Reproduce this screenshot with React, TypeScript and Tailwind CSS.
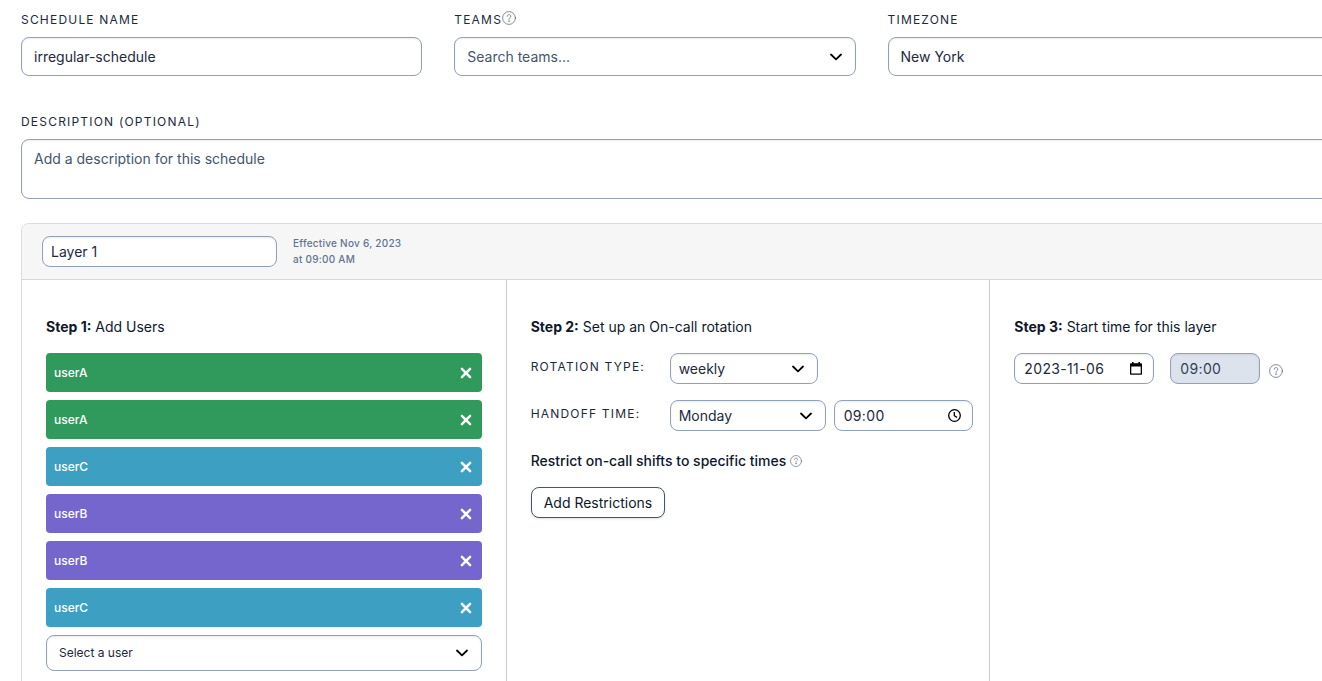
import { useState } from "react";

const field =
  "w-full rounded-lg border border-slate-400 bg-white text-sm text-slate-800 placeholder:text-slate-600 shadow-[inset_0_1px_2px_rgba(0,0,0,0.08)]";
const label = "text-xs leading-[19px] tracking-widest uppercase text-slate-800";

const initialUsers = [
  { name: "userA", color: "bg-[#30995c]" },
  { name: "userA", color: "bg-[#30995c]" },
  { name: "userC", color: "bg-[#3d9fc1]" },
  { name: "userB", color: "bg-[#7566cd]" },
  { name: "userB", color: "bg-[#7566cd]" },
  { name: "userC", color: "bg-[#3d9fc1]" },
];

function HelpIcon({ className = "size-[14px]" }: { className?: string }) {
  return (
    <svg className={`shrink-0 text-slate-700 ${className}`} viewBox="0 0 14 14" fill="none" stroke="currentColor" strokeWidth="0.6" strokeLinecap="round">
      <circle cx="7" cy="7" r="6.4" />
      <path d="M5.2 5.400c0-1.100.8-1.800 1.800-1.800s1.800.7 1.800 1.700c0 .8-.5 1.200-1 1.600-.5.4-.8.7-.8 1.300v.3" />
      <circle cx="7" cy="10.1" r="0.2" fill="currentColor" />
    </svg>
  );
}

function Select({ id, options, className = "", small = false, ariaLabel }: any) {
  return (
    <div className={`relative ${className}`}>
      <select id={id} aria-label={ariaLabel} className={`${field} h-full appearance-none ${small ? "pl-2" : "pl-3"}`}>
        {options.map((option: string) => (
          <option key={option}>{option}</option>
        ))}
      </select>
      <svg className="pointer-events-none absolute right-[14px] top-1/2 h-2 w-3 -translate-y-1/2" viewBox="0 0 12 8" fill="none" stroke="black" strokeWidth="1.8" strokeLinecap="round" strokeLinejoin="round">
        <path d="M1 1.500l5 4.800 5-4.800" />
      </svg>
    </div>
  );
}

export default function App() {
  const [users, setUsers] = useState(initialUsers);

  return (
    <div className="h-screen overflow-hidden bg-white pl-[21px] pt-[10px] font-['Inter',sans-serif] text-sm text-slate-900">
      {/* Form is wider than the window and runs off the right side */}
      <form className="w-[calc(100%+152px)]">
        <div className="grid grid-cols-[13fr_13fr_19fr] gap-x-8">
          <div className="flex flex-col gap-2">
            <label htmlFor="name" className={label}>Schedule name</label>
            <input id="name" defaultValue="irregular-schedule" className={`${field} h-[39px] px-3`} />
          </div>
          <div className="flex flex-col gap-2">
            <div className="flex items-start">
              <label htmlFor="teams" className={label}>Teams</label>
              <HelpIcon className="mt-px size-[14px]" />
            </div>
            <Select id="teams" options={["Search teams..."]} className="h-[39px] [&>select]:text-slate-600" />
          </div>
          <div className="flex flex-col gap-2">
            <label htmlFor="timezone" className={label}>Timezone</label>
            <Select id="timezone" options={["New York"]} className="h-[39px]" />
          </div>
        </div>

        <div className="mt-9 flex flex-col gap-2">
          <label htmlFor="description" className={label}>Description (optional)</label>
          <textarea id="description" placeholder="Add a description for this schedule" className={`${field} h-[60px] resize-none px-3 py-[9px]`} />
        </div>

        {/* Layer */}
        <section className="mt-6 rounded-lg border border-[#dcdcdc]">
          <header className="flex items-start gap-4 rounded-t-lg border-b border-[#d8d8d8] bg-[#f6f6f6] px-5 pt-3">
            <div className="w-[235px] pb-3">
              <input aria-label="Layer name" defaultValue="Layer 1" className={`${field} block h-[31px] px-2`} />
            </div>
            <p className="-mt-px text-[10px] leading-4 font-medium tracking-wide text-slate-500">
              Effective Nov 6, 2023
              <br />
              at 09:00 AM
            </p>
          </header>

          <div className="grid grid-cols-3">
            {/* Step 1 */}
            <div className="px-6 pt-9 pb-6">
              <h3 className="mb-4 leading-[21px]"><b className="font-bold">Step 1:</b> Add Users</h3>
              <ul className="flex flex-col gap-2">
                {users.map((user, i) => (
                  <li key={i} className={`flex h-[39px] items-center justify-between rounded pl-2 pr-[10px] text-xs font-medium text-white ${user.color}`}>
                    {user.name}
                    <button type="button" aria-label={`Remove ${user.name}`} onClick={() => setUsers(users.filter((_, n) => n !== i))}>
                      <svg className="size-3" viewBox="0 0 12 12" stroke="currentColor" strokeWidth="2.5" strokeLinecap="round">
                        <path d="M1.900 1.900l8.200 8.200M10.100 1.900l-8.200 8.200" />
                      </svg>
                    </button>
                  </li>
                ))}
              </ul>
              <Select ariaLabel="Select a user" options={["Select a user"]} className="mt-2 h-9 [&>select]:text-xs" />
            </div>

            {/* Step 2 */}
            <div className="border-l border-[#c3cad9] pt-9 pl-6 pr-4">
              <h3 className="mb-4 leading-[21px]"><b className="font-bold">Step 2:</b> Set up an On-call rotation</h3>
              <div className="grid grid-cols-[139px_1fr] gap-y-4">
                <label htmlFor="rotation" className={`${label} pt-1`}>Rotation type:</label>
                <Select id="rotation" small options={["weekly"]} className="h-[31px] w-[148px]" />
                <label htmlFor="handoff" className={`${label} pt-1`}>Handoff time:</label>
                <div className="flex gap-2">
                  <Select id="handoff" small options={["Monday"]} className="h-[31px] w-[156px]" />
                  <div className="relative flex-1">
                    <input aria-label="Handoff hour" defaultValue="09:00" className={`${field} h-[31px] px-[9px] tracking-wide`} />
                    <svg className="pointer-events-none absolute right-3 top-[9px] size-[13px]" viewBox="0 0 13 13" fill="none" stroke="black" strokeWidth="1.3">
                      <circle cx="6.5" cy="6.5" r="5.8" />
                      <path d="M6.3 3v3.700l2.700 1.700" />
                    </svg>
                  </div>
                </div>
              </div>
              <h4 className="mt-[19px] mb-4 flex items-center gap-1 font-medium leading-[21px]">
                Restrict on-call shifts to specific times
                <HelpIcon className="size-3" />
              </h4>
              <button type="button" className="h-[31px] rounded-lg border border-slate-600 bg-white px-3 shadow-sm">
                Add Restrictions
              </button>
            </div>

            {/* Step 3 */}
            <div className="border-l border-[#c3cad9] px-6 pt-9">
              <h3 className="mb-4 leading-[21px]"><b className="font-bold">Step 3:</b> Start time for this layer</h3>
              <div className="flex items-center">
                <div className="relative w-[140px]">
                  <input aria-label="Start date" defaultValue="2023-11-06" className={`${field} block h-[31px] px-[9px] tracking-wide`} />
                  <svg className="pointer-events-none absolute right-3 top-[9px] h-[13px] w-3" viewBox="0 0 12 13">
                    <path fillRule="evenodd" d="M2 0h1.600v1.200h4.800V0H10v1.200h1c.6 0 1 .4 1 1v9.600c0 .6-.4 1-1 1H1c-.6 0-1-.4-1-1V2.200c0-.6.4-1 1-1h1zM1.300 4.500v7h9.400v-7z" />
                  </svg>
                </div>
                <input aria-label="Start hour" defaultValue="09:00" disabled className="ml-4 h-[31px] w-[90px] rounded-lg border border-slate-400 bg-[#dde3ed] px-[9px] tracking-wide text-slate-700 shadow-[inset_0_1px_2px_rgba(0,0,0,0.08)]" />
                <HelpIcon className="ml-[9px] mt-1 size-[14px]" />
              </div>
            </div>
          </div>
        </section>
      </form>
    </div>
  );
}
